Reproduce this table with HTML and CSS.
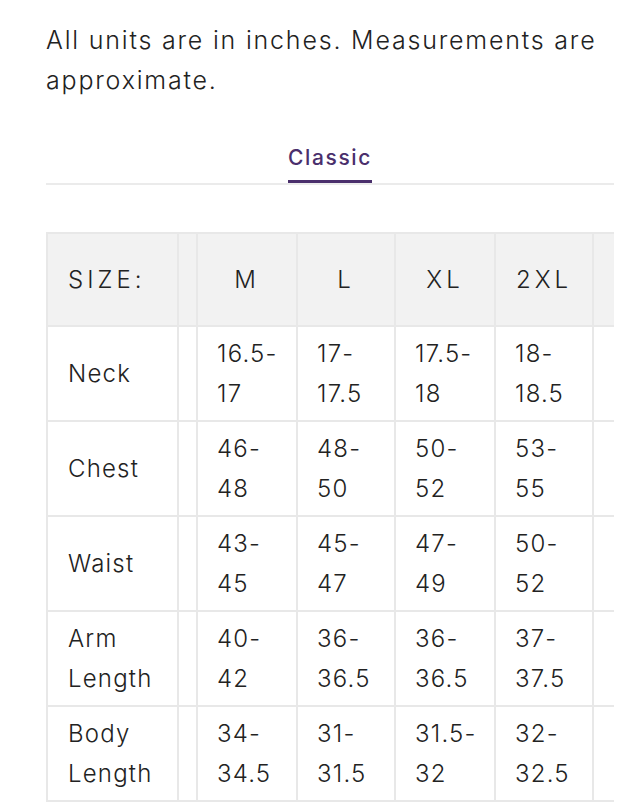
FILE: index.html
```html
<!DOCTYPE html>
<html lang="en">
<head>
<meta charset="utf-8">
<title>Size chart</title>
<link rel="stylesheet" href="styles.css">
</head>
<body>
<main class="page">
  <p class="note">All units are in inches. Measurements are approximate.</p>
  <nav class="tabs">
    <span class="tab tab-active">Classic</span>
  </nav>
  <div class="table-wrap">
    <table class="sizes">
      <thead>
        <tr>
          <th class="c-label">SIZE:</th>
          <th class="c-gap"></th>
          <th class="c-wide">M</th>
          <th class="c-narrow">L</th>
          <th class="c-wide">XL</th>
          <th class="c-narrow">2XL</th>
          <th class="c-wide"></th>
        </tr>
      </thead>
      <tbody>
        <tr>
          <td class="label">Neck</td><td class="gap"></td>
          <td>16.5-<wbr>17</td><td>17-<wbr>17.5</td><td>17.5-<wbr>18</td><td>18-<wbr>18.5</td><td></td>
        </tr>
        <tr>
          <td class="label">Chest</td><td class="gap"></td>
          <td>46-<wbr>48</td><td>48-<wbr>50</td><td>50-<wbr>52</td><td>53-<wbr>55</td><td></td>
        </tr>
        <tr>
          <td class="label">Waist</td><td class="gap"></td>
          <td>43-<wbr>45</td><td>45-<wbr>47</td><td>47-<wbr>49</td><td>50-<wbr>52</td><td></td>
        </tr>
        <tr>
          <td class="label">Arm Length</td><td class="gap"></td>
          <td>40-<wbr>42</td><td>36-<wbr>36.5</td><td>36-<wbr>36.5</td><td>37-<wbr>37.5</td><td></td>
        </tr>
        <tr>
          <td class="label">Body Length</td><td class="gap"></td>
          <td>34-<wbr>34.5</td><td>31-<wbr>31.5</td><td>31.5-<wbr>32</td><td>32-<wbr>32.5</td><td></td>
        </tr>
      </tbody>
    </table>
  </div>
</main>
</body>
</html>
```
FILE: styles.css
```css
html, body {
  margin: 0;
  padding: 0;
  background: #ffffff;
}

body {
  font-family: Inter, "Liberation Sans", sans-serif;
  color: #222222;
}

.page {
  padding: 20px 28px 0 46px;
}

.note {
  margin: 0;
  font-size: 25px;
  line-height: 40px;
  letter-spacing: 1.8px;
  font-weight: 300;
}

.tabs {
  margin-top: 46px;
  display: flex;
  justify-content: center;
  border-bottom: 2px solid #ebebeb;
}

.tab {
  font-size: 21px;
  line-height: 24px;
  font-weight: 500;
  letter-spacing: 1.6px;
  color: #4a2f6c;
  padding-bottom: 10px;
  border-bottom: 3px solid #4a2f6c;
}

.table-wrap {
  margin-top: 47px;
  overflow: hidden;
}

.sizes {
  border-collapse: separate;
  border-spacing: 0;
  table-layout: fixed;
  width: 648px;
  border-top: 2px solid #e8e8e8;
  border-left: 2px solid #e8e8e8;
  font-size: 24px;
  line-height: 40px;
  letter-spacing: 1.2px;
  font-weight: 300;
}

.sizes th,
.sizes td {
  box-sizing: border-box;
  border-right: 2px solid #e8e8e8;
  border-bottom: 2px solid #e8e8e8;
  vertical-align: middle;
  padding: 0 19px;
  text-align: left;
}

.sizes th {
  height: 93px;
  background: #f2f2f2;
  font-weight: 300;
  letter-spacing: 4px;
  text-align: center;
}

.sizes th.c-label {
  text-align: left;
  padding-left: 20px;
}

.sizes td {
  height: 95px;
}

.sizes td.label {
  padding-left: 20px;
}

.c-label { width: 131px; }
.c-gap { width: 19px; padding: 0 !important; }
.c-wide { width: 100px; }
.c-narrow { width: 98px; }

.sizes td.gap {
  padding: 0;
}
```
